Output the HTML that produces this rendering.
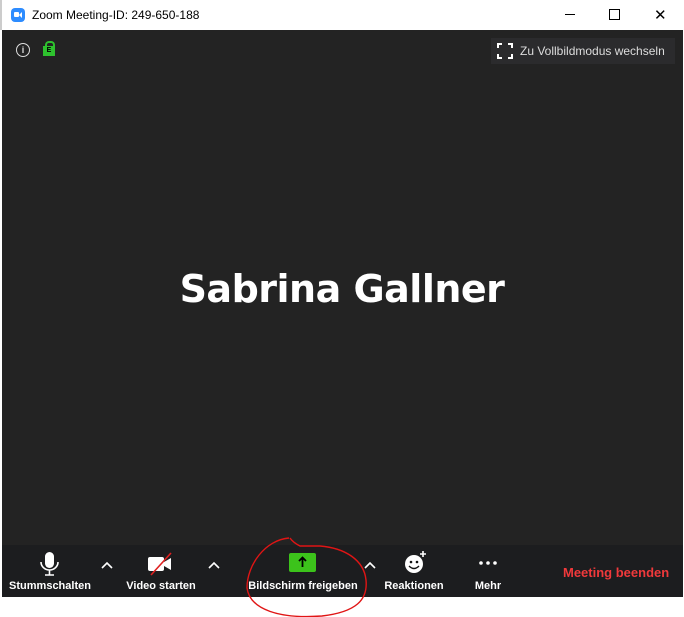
<!DOCTYPE html>
<html><head><style>
body{margin:0;width:684px;height:617px;background:#fff;position:relative;overflow:hidden;font-family:"Liberation Sans",sans-serif}
.a{position:absolute}
.lbl{position:absolute;top:580px;color:#fff;font-size:11px;font-weight:bold;white-space:nowrap;transform:translateX(-50%)}
</style></head><body>
<div class="a" style="left:0;top:0;width:684px;height:30px;background:#fff;border-left:2px solid #ccc;box-sizing:border-box"></div>
<div class="a" style="left:11px;top:8px;width:14px;height:14px;border-radius:4px;background:#2d8cff"></div>
<div class="a" style="left:14px;top:12px;width:5px;height:5px;background:#fff;border-radius:1px"></div>
<div class="a" style="left:19px;top:12px;width:0;height:0;border-top:3px solid transparent;border-bottom:3px solid transparent;border-right:3px solid #fff"></div>
<div class="a" style="left:32px;top:8px;font-size:12px;color:#000">Zoom Meeting-ID: 249-650-188</div>
<div class="a" style="left:565px;top:14px;width:10px;height:1px;background:#000"></div>
<div class="a" style="left:609px;top:9px;width:9px;height:9px;border:1px solid #000"></div>
<div class="a" style="left:654px;top:6px;font-size:15px;color:#000">✕</div>
<div class="a" style="left:2px;top:30px;width:681px;height:515px;background:#232323"></div>
<div class="a" style="left:2px;top:545px;width:681px;height:52px;background:#1c1d1f"></div>
<div class="a" style="left:16px;top:43px;width:12px;height:12px;border:1.5px solid #ddd;border-radius:50%;color:#ddd;font-size:9px;text-align:center;line-height:12px;font-weight:bold">i</div>
<div class="a" style="left:45px;top:41px;width:6px;height:5px;border:2px solid #2ec22e;border-bottom:none;border-radius:4px 4px 0 0"></div>
<div class="a" style="left:43px;top:46px;width:12px;height:10px;background:#2ec22e;color:#000;font-size:7px;text-align:center;line-height:10px;font-weight:bold">E</div>
<div class="a" style="left:491px;top:38px;width:184px;height:26px;background:#2b2b2d"></div>
<svg class="a" style="left:497px;top:43px" width="16" height="16"><path d="M1 5V1h4 M11 1h4v4 M15 11v4h-4 M5 15H1v-4" stroke="#fff" stroke-width="2" fill="none"/></svg>
<div class="a" style="left:520px;top:44px;font-size:12px;color:#ddd">Zu Vollbildmodus wechseln</div>
<div class="a" style="left:0;top:267px;width:684px;text-align:center;font-size:38px;font-weight:bold;color:#fff;font-family:'DejaVu Sans',sans-serif;letter-spacing:-0.5px">Sabrina Gallner</div>
<svg class="a" style="left:0;top:545px" width="684" height="40">
<rect x="45" y="7" width="9" height="16" rx="4.5" fill="#fff"/>
<path d="M41 17 a8.5 8 0 0 0 17 0 M49.5 25 v5 M45 30 h9" stroke="#fff" stroke-width="1.6" fill="none"/>
<path d="M102 23 l5 -5 l5 5 M209 23 l5 -5 l5 5 M365 23 l5 -5 l5 5" stroke="#fff" stroke-width="1.6" fill="none"/>
<rect x="148" y="12" width="16" height="14" rx="2" fill="#fff"/><path d="M164 17 l7 -4 v12 l-7 -4z" fill="#fff"/>
<path d="M151 30 L171 8" stroke="#e02020" stroke-width="1.6"/>
<rect x="289" y="8" width="27" height="19" rx="2" fill="#3cc31b"/>
<path d="M302.5 22 v-9 M299 16 l3.5 -3.5 l3.5 3.5" stroke="#000" stroke-width="1.8" fill="none"/>
<circle cx="414" cy="19" r="9" fill="#fff"/><circle cx="411" cy="17" r="1.3" fill="#111"/><circle cx="417" cy="17" r="1.3" fill="#111"/>
<path d="M409 21 q5 5 10 0" stroke="#111" stroke-width="1.4" fill="none"/>
<path d="M423 6 v6 M420 9 h6" stroke="#fff" stroke-width="1.6"/>
<circle cx="481" cy="18" r="1.8" fill="#fff"/><circle cx="488" cy="18" r="1.8" fill="#fff"/><circle cx="495" cy="18" r="1.8" fill="#fff"/>
</svg>
<div class="lbl" style="left:50px">Stummschalten</div>
<div class="lbl" style="left:161px">Video starten</div>
<div class="lbl" style="left:303px">Bildschirm freigeben</div>
<div class="lbl" style="left:414px">Reaktionen</div>
<div class="lbl" style="left:488px">Mehr</div>
<div class="a" style="left:563px;top:565px;font-size:13px;font-weight:bold;color:#f0393b">Meeting beenden</div>
<svg class="a" style="left:0;top:0" width="684" height="617">
<path d="M289 538 C265 540 247 565 247 588 C250 610 280 619 322 616 C356 612 368 600 366 580 C364 560 345 548 320 546 L300 546 C296 544 292 541 290 538" stroke="#e01515" stroke-width="1.4" fill="none"/>
</svg>
</body></html>
